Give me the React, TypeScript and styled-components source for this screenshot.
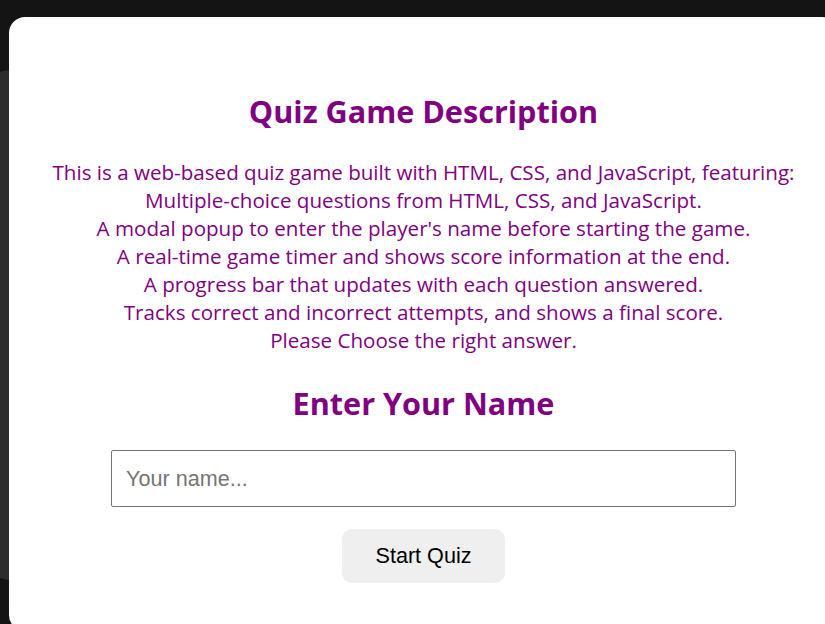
import React from "react";
import styled, { createGlobalStyle } from "styled-components";

const GlobalStyle = createGlobalStyle`
  html, body {
    margin: 0;
    padding: 0;
    overflow: hidden;
    background: #141414;
  }
  body {
    font-family: "Open Sans", "Noto Sans", sans-serif;
  }
  * { box-sizing: border-box; }
`;

const Page = styled.div`
  position: relative;
  width: 825px;
  height: 624px;
  background: #141414;
  padding-top: 70px;
  overflow: hidden;
`;

const BackPanel = styled.div`
  margin-left: -14px;
  width: 860px;
  height: 510px;
  background: #2d2d2d;
  border-radius: 24px;
`;

const Modal = styled.div`
  position: absolute;
  top: 17px;
  left: 9px;
  width: 829px;
  height: 614px;
  background: #ffffff;
  border-radius: 16px;
  padding-top: 74px;
  display: flex;
  flex-direction: column;
  align-items: center;
`;

const Title = styled.h2<{ $gap: number }>`
  margin: 0 0 ${(p) => p.$gap}px;
  font-family: "Open Sans", sans-serif;
  font-weight: 700;
  font-size: 30.6px;
  line-height: 40px;
  color: #800080;
  text-align: center;
  white-space: nowrap;
`;

const Description = styled.div`
  margin: 0 0 29px;
  font-family: "Open Sans", sans-serif;
  font-size: 20.6px;
  line-height: 28px;
  color: #800080;
  text-align: center;
`;

const Line = styled.div`
  white-space: nowrap;
`;

const NameInput = styled.input`
  width: 625px;
  height: 57px;
  margin: 0 0 22px;
  padding: 0 14px;
  border: 1px solid #767676;
  border-radius: 2px;
  font-family: "Liberation Sans", Arial, sans-serif;
  font-size: 21.6px;
  color: #000;
  background: #fff;
  outline: none;
  &::placeholder {
    color: #757575;
  }
`;

const StartButton = styled.button`
  width: 163px;
  height: 54px;
  border: none;
  border-radius: 10px;
  background: #efefef;
  font-family: "Liberation Sans", Arial, sans-serif;
  font-size: 21.6px;
  color: #000;
  cursor: pointer;
  padding: 0;
`;

const lines = [
  "This is a web-based quiz game built with HTML, CSS, and JavaScript, featuring:",
  "Multiple-choice questions from HTML, CSS, and JavaScript.",
  "A modal popup to enter the player's name before starting the game.",
  "A real-time game timer and shows score information at the end.",
  "A progress bar that updates with each question answered.",
  "Tracks correct and incorrect attempts, and shows a final score.",
  "Please Choose the right answer.",
];

export default function App() {
  return (
    <>
      <GlobalStyle />
      <Page>
        <BackPanel />
        <Modal>
          <Title $gap={27}>Quiz Game Description</Title>
          <Description>
            {lines.map((l) => (
              <Line key={l}>{l}</Line>
            ))}
          </Description>
          <Title $gap={27}>Enter Your Name</Title>
          <NameInput type="text" placeholder="Your name..." />
          <StartButton>Start Quiz</StartButton>
        </Modal>
      </Page>
    </>
  );
}
